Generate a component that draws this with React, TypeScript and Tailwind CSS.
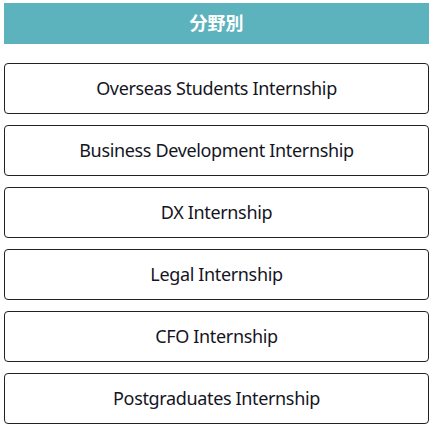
import React from "react";

const items = [
  "Overseas Students Internship",
  "Business Development Internship",
  "DX Internship",
  "Legal Internship",
  "CFO Internship",
  "Postgraduates Internship",
];

export default function App() {
  return (
    <div
      className="w-[432px] h-[432px] bg-white px-[4px] pt-[3px]"
      style={{ fontFamily: '"Noto Sans", "Noto Sans CJK JP", sans-serif' }}
    >
      <div className="h-[41px] w-[425px] bg-[#5db3bd] flex items-center justify-center text-white font-bold text-[18px]">
        分野別
      </div>
      <div className="mt-[19px] flex flex-col gap-[11px] w-[425px]">
        {items.map((t) => (
          <div
            key={t}
            className="h-[51px] border border-[#222] rounded-[4px] flex items-center justify-center text-[18px] tracking-[-0.35px] text-[#15151f]"
          >
            {t}
          </div>
        ))}
      </div>
    </div>
  );
}
